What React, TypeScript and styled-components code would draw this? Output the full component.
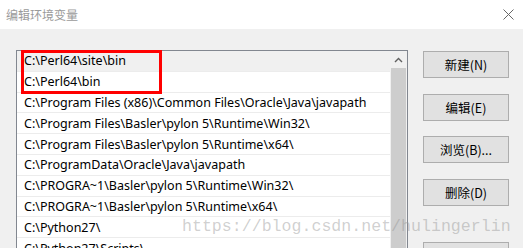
import React from 'react';
import styled, { createGlobalStyle } from 'styled-components';

const GlobalStyle = createGlobalStyle`
  html, body {
    margin: 0;
    padding: 0;
    width: 523px;
    height: 248px;
    overflow: hidden;
    background: #f0f0f0;
  }
`;

const Dialog = styled.div`
  position: relative;
  width: 523px;
  height: 248px;
  overflow: hidden;
  display: flex;
  flex-direction: column;
  font-family: "Noto Sans", "Noto Sans CJK SC", sans-serif;
  font-size: 12.5px;
  color: #000;
  background: #f0f0f0;
`;

const TitleBar = styled.div`
  height: 29px;
  flex: none;
  background: #fff;
  display: flex;
  align-items: center;
  justify-content: space-between;
  padding: 0 9px 0 6px;
  box-sizing: border-box;
`;

const Title = styled.span`
  color: #9a9a9a;
  font-size: 12px;
  font-family: "Noto Sans CJK SC", sans-serif;
`;

const Body = styled.div`
  flex: 1;
  display: flex;
  padding: 21px 0 0 16px;
  gap: 15px;
`;

const ListBox = styled.div`
  position: relative;
  width: 392px;
  height: 220px;
  box-sizing: border-box;
  border: 1px solid #828790;
  border-bottom: none;
  background: #fff;
  display: flex;
`;

const Rows = styled.div`
  flex: 1;
  display: flex;
  flex-direction: column;
`;

const Row = styled.div<{ $selected?: boolean }>`
  height: 20.8px;
  flex: none;
  box-sizing: border-box;
  border-bottom: 1px solid #ececec;
  background: ${p => (p.$selected ? '#f0f0f0' : '#fff')};
  padding-left: 7px;
  display: flex;
  align-items: center;
  white-space: nowrap;
  overflow: hidden;
`;

const ScrollBar = styled.div`
  width: 17px;
  flex: none;
  background: #f0f0f0;
  display: flex;
  flex-direction: column;
  align-items: center;
`;

const ArrowUp = styled.div`
  height: 17px;
  width: 100%;
  display: flex;
  align-items: center;
  justify-content: center;
`;

const Thumb = styled.div`
  width: 15px;
  flex: 1;
  background: #cdcdcd;
`;

const Highlight = styled.div`
  position: absolute;
  left: 4px;
  top: -1px;
  width: 141px;
  height: 44px;
  box-sizing: border-box;
  border: 3px solid #ff0000;
  pointer-events: none;
`;

const Buttons = styled.div`
  display: flex;
  flex-direction: column;
  gap: 15.5px;
  padding-top: 1px;
`;

const Button = styled.div<{ $apart?: boolean }>`
  width: 86px;
  height: 27px;
  flex: none;
  box-sizing: border-box;
  margin-top: ${p => (p.$apart ? '21px' : '0')};
  background: #e1e1e1;
  border: 1px solid #adadad;
  display: flex;
  align-items: center;
  justify-content: center;
  font-size: 12.5px;
  font-family: "Noto Sans CJK SC", sans-serif;
`;

const Watermark = styled.div`
  position: absolute;
  left: 182px;
  top: 217px;
  font-family: "Liberation Mono", monospace;
  font-size: 16.6px;
  color: rgba(150, 150, 150, 0.45);
  pointer-events: none;
  white-space: nowrap;
`;

const paths = [
  'C:\\Perl64\\site\\bin',
  'C:\\Perl64\\bin',
  'C:\\Program Files (x86)\\Common Files\\Oracle\\Java\\javapath',
  'C:\\Program Files\\Basler\\pylon 5\\Runtime\\Win32\\',
  'C:\\Program Files\\Basler\\pylon 5\\Runtime\\x64\\',
  'C:\\ProgramData\\Oracle\\Java\\javapath',
  'C:\\PROGRA~1\\Basler\\pylon 5\\Runtime\\Win32\\',
  'C:\\PROGRA~1\\Basler\\pylon 5\\Runtime\\x64\\',
  'C:\\Python27\\',
  'C:\\Python27\\Scripts\\',
];

const buttons = ['新建(N)', '编辑(E)', '浏览(B)...', '删除(D)', '上移(U)'];

function App() {
  return (
    <Dialog>
      <GlobalStyle />
      <TitleBar>
        <Title>编辑环境变量</Title>
        <svg width="11" height="11" viewBox="0 0 11 11">
          <path d="M0.5 0.5 L10.5 10.5 M10.5 0.5 L0.5 10.5" stroke="#666" strokeWidth="1" fill="none" />
        </svg>
      </TitleBar>
      <Body>
        <ListBox>
          <Rows>
            {paths.map((p, i) => (
              <Row key={i} $selected={i === 0}>{p}</Row>
            ))}
          </Rows>
          <ScrollBar>
            <ArrowUp>
              <svg width="9" height="6" viewBox="0 0 9 6">
                <path d="M1 5 L4.5 1.5 L8 5" stroke="#606060" strokeWidth="1.4" fill="none" />
              </svg>
            </ArrowUp>
            <Thumb />
          </ScrollBar>
          <Highlight />
        </ListBox>
        <Buttons>
          {buttons.map((b, i) => (
            <Button key={b} $apart={i === 4}>{b}</Button>
          ))}
        </Buttons>
      </Body>
      <Watermark>https://blog.csdn.net/hulingerlin</Watermark>
    </Dialog>
  );
}

export default App;
